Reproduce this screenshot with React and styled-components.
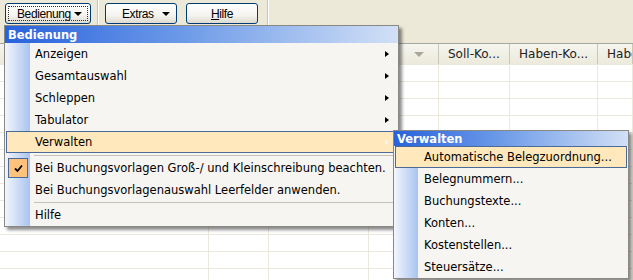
import React from 'react';
import styled, { createGlobalStyle } from 'styled-components';

const GlobalStyle = createGlobalStyle`
  html, body {
    margin: 0;
    padding: 0;
    background: #ece9d8;
  }
  body {
    font-family: "DejaVu Sans", Verdana, sans-serif;
    font-size: 11px;
    color: #000;
  }
`;

const Page = styled.div`
  position: relative;
  width: 633px;
  height: 280px;
  overflow: hidden;
  background: #ece9d8;
`;

const Toolbar = styled.div`
  display: flex;
  align-items: flex-start;
  height: 43px;
  padding-left: 5px;
  box-sizing: border-box;
`;

const ToolButton = styled.div`
  display: flex;
  align-items: center;
  justify-content: ${(p) => (p.$menu ? 'space-between' : 'center')};
  width: ${(p) => p.$w}px;
  height: 21px;
  margin-top: 3px;
  margin-left: ${(p) => p.$ml || 0}px;
  padding: 0 ${(p) => p.$pr || 0}px 0 ${(p) => p.$pl || 0}px;
  box-sizing: border-box;
  border: 1px solid #003c74;
  border-radius: 3px;
  background: linear-gradient(to bottom, #ffffff 0%, #f4f3ee 60%, #dedbd0 100%);
  font-family: "Liberation Sans", Arial, sans-serif;
  font-size: 12px;
  letter-spacing: -0.4px;
  white-space: nowrap;
  position: relative;

  &::after {
    content: '';
    display: ${(p) => (p.$focus ? 'block' : 'none')};
    position: absolute;
    inset: 2px;
    border: 1px dotted #333;
  }
`;

const DropArrow = styled.span`
  flex: none;
  width: 0;
  height: 0;
  border-left: 4px solid transparent;
  border-right: 4px solid transparent;
  border-top: 4px solid #000;
`;

const ToolSep = styled.div`
  width: 1px;
  height: 25px;
  background: #c8c5b4;
  border-right: 1px solid #fff;
  margin: 0 ${(p) => p.$right}px 0 ${(p) => p.$left}px;
`;

const Grid = styled.div`
  background: #fff;
  height: 237px;
`;

const HeaderRow = styled.div`
  display: flex;
  height: 21px;
  border-top: 1px solid #a5a99d;
  background: linear-gradient(to bottom, #f6f5ef, #ebeadb);
  box-sizing: border-box;
`;

const HeaderCell = styled.div`
  display: flex;
  align-items: center;
  width: ${(p) => p.$w}px;
  flex: none;
  padding-left: 9px;
  box-sizing: border-box;
  border-right: 1px solid #cbc7b8;
  font-size: 12px;
  color: #222;
  white-space: nowrap;
  overflow: hidden;
`;

const SortArrow = styled.span`
  width: 0;
  height: 0;
  border-left: 5px solid transparent;
  border-right: 5px solid transparent;
  border-top: 5px solid #aca899;
  margin-left: 36px;
`;

const BodyRow = styled.div`
  display: flex;
  height: 17px;
  border-top: 1px solid #ebe9dd;
  box-sizing: border-box;
`;

const BodyCell = styled.div`
  width: ${(p) => p.$w}px;
  flex: none;
  border-right: 1px solid #ebe9dd;
  box-sizing: border-box;
`;

const Menu = styled.div`
  position: absolute;
  left: ${(p) => p.$x}px;
  top: ${(p) => p.$y}px;
  width: ${(p) => p.$w}px;
  border: 1px solid #8a8883;
  background: #f6f5f1;
  box-shadow: 3px 3px 3px rgba(0, 0, 0, 0.45);
`;

const MenuTitle = styled.div`
  height: ${(p) => p.$h}px;
  display: flex;
  align-items: center;
  padding-left: 3px;
  color: #fff;
  font-weight: bold;
  font-size: 11.5px;
  background: linear-gradient(to right, #2862dc 0%, #6c9ae8 45%, #d2e0f6 100%);
`;

const MenuBody = styled.div`
  background: linear-gradient(
    to right,
    #f3f6fc 0px,
    #a9c4f0 ${(p) => p.$strip}px,
    #f6f5f1 ${(p) => p.$strip}px
  );
`;

const Item = styled.div`
  position: relative;
  display: flex;
  align-items: center;
  height: 22px;
  box-sizing: border-box;
  margin: 0 ${(p) => p.$mr}px 0 1px;
  padding-left: ${(p) => p.$pad}px;
  font-size: 11.5px;
  white-space: nowrap;
  border: 1px solid ${(p) => (p.$active ? '#4c6a98' : 'transparent')};
  background: ${(p) => (p.$active ? '#ffe8bc' : 'transparent')};
`;

const SubArrow = styled.span`
  position: absolute;
  right: 5px;
  top: 7px;
  width: 0;
  height: 0;
  border-top: 3.5px solid transparent;
  border-bottom: 3.5px solid transparent;
  border-left: 4px solid ${(p) => (p.$light ? '#f4f4f4' : '#000')};
`;

const CheckBox = styled.span`
  position: absolute;
  left: 1px;
  top: 0;
  width: 20px;
  height: 20px;
  box-sizing: border-box;
  border: 1px solid #4c6a98;
  background: #ffc27c;
  display: flex;
  align-items: center;
  justify-content: center;
`;

const Separator = styled.div`
  height: ${(p) => p.$h}px;
  display: flex;
  align-items: center;
  padding-left: 29px;
  padding-right: 3px;

  &::before {
    content: '';
    flex: 1;
    height: 1px;
    background: #c5c2b8;
  }
`;

const cols = [209, 60, 100, 70, 71, 88, 35];
const headers = ['', '', '', null, 'Soll-Ko...', 'Haben-Ko...', 'Haben'];

const mainItems = [
  { label: 'Anzeigen', sub: true },
  { label: 'Gesamtauswahl', sub: true },
  { label: 'Schleppen', sub: true },
  { label: 'Tabulator', sub: true },
  { label: 'Verwalten', sub: true, active: true },
];

const subItems = [
  'Automatische Belegzuordnung...',
  'Belegnummern...',
  'Buchungstexte...',
  'Konten...',
  'Kostenstellen...',
  'Steuersätze...',
];

function App() {
  return (
    <Page>
      <GlobalStyle />
      <Toolbar>
        <ToolButton $w={86} $menu $focus $pl={11} $pr={8}>
          <span>Bedienung</span>
          <DropArrow />
        </ToolButton>
        <ToolSep $left={6} $right={6} />
        <ToolButton $w={72} $menu $pl={16} $pr={6}>
          <span>Extras</span>
          <DropArrow />
        </ToolButton>
        <ToolButton $w={72} $ml={9}>
          <span>
            <u>H</u>ilfe
          </span>
        </ToolButton>
        <ToolSep $left={9} $right={0} />
      </Toolbar>

      <Grid>
        <HeaderRow>
          {cols.map((w, i) => (
            <HeaderCell key={i} $w={w}>
              {headers[i] === null ? <SortArrow /> : headers[i]}
            </HeaderCell>
          ))}
        </HeaderRow>
        {Array.from({ length: 13 }).map((_, r) => (
          <BodyRow key={r}>
            {cols.map((w, i) => (
              <BodyCell key={i} $w={w} />
            ))}
          </BodyRow>
        ))}
      </Grid>

      <Menu $x={4} $y={25} $w={393}>
        <MenuTitle $h={17}>Bedienung</MenuTitle>
        <MenuBody $strip={25}>
          {mainItems.map((it) => (
            <Item key={it.label} $pad={28} $mr={3} $active={it.active}>
              {it.label}
              {it.sub && <SubArrow $light={it.active} />}
            </Item>
          ))}
          <Separator $h={4} />
          <Item $pad={28} $mr={3}>
            <CheckBox>
              <svg width="9" height="9" viewBox="0 0 9 9">
                <path d="M1 4.5 L3.5 7 L8 1.5" fill="none" stroke="#000" strokeWidth="1.8" />
              </svg>
            </CheckBox>
            Bei Buchungsvorlagen Groß-/ und Kleinschreibung beachten.
          </Item>
          <Item $pad={28} $mr={3}>
            Bei Buchungsvorlagenauswahl Leerfelder anwenden.
          </Item>
          <Separator $h={3} />
          <Item $pad={28} $mr={3}>
            Hilfe
          </Item>
        </MenuBody>
      </Menu>

      <Menu $x={393} $y={130} $w={234}>
        <MenuTitle $h={15}>Verwalten</MenuTitle>
        <MenuBody $strip={24}>
          {subItems.map((label, i) => (
            <Item key={label} $pad={28} $mr={1} $active={i === 0}>
              {label}
            </Item>
          ))}
        </MenuBody>
      </Menu>
    </Page>
  );
}

export default App;
